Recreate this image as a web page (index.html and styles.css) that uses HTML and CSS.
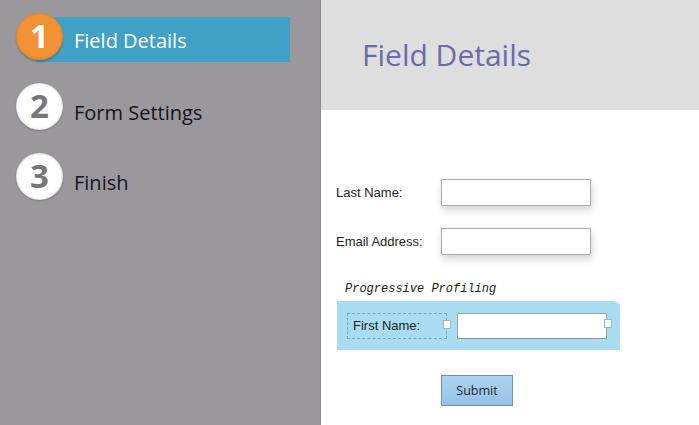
FILE: index.html
```html
<!DOCTYPE html>
<html>
<head>
<meta charset="utf-8">
<link rel="stylesheet" href="styles.css">
</head>
<body>
<div class="app">
  <aside class="sidebar">
    <div class="step active">
      <span class="num">1</span>
      <span class="label">Field Details</span>
    </div>
    <div class="step">
      <span class="num">2</span>
      <span class="label">Form Settings</span>
    </div>
    <div class="step">
      <span class="num">3</span>
      <span class="label">Finish</span>
    </div>
  </aside>
  <main class="main">
    <header class="header"><h1 class="title">Field Details</h1></header>
    <section class="form">
      <div class="row">
        <label class="lbl">Last Name:</label>
        <div class="input"></div>
      </div>
      <div class="row">
        <label class="lbl">Email Address:</label>
        <div class="input"></div>
      </div>
      <div class="pp-title">Progressive Profiling</div>
      <div class="pp-box">
        <div class="pp-label">First Name:<span class="handle h-left"></span></div>
        <div class="pp-input"><span class="handle h-right"></span></div>
      </div>
      <div class="submit-row"><button class="submit">Submit</button></div>
    </section>
  </main>
</div>
</body>
</html>
```
FILE: styles.css
```css
* { box-sizing: border-box; }
html, body { margin: 0; padding: 0; }
body { width: 699px; height: 425px; overflow: hidden; font-family: "Open Sans", sans-serif; }
.app { display: flex; height: 425px; }
.sidebar {
  width: 321px;
  flex: none;
  background: #9a989d;
  border-right: 1px solid #8a888d;
  padding-top: 17px;
}
.step {
  display: flex;
  align-items: center;
  height: 45px;
  margin-left: 36px;
  width: 254px;
  margin-bottom: 25px;
}
.step.active { background: #40a0c6; }
.num {
  flex: none;
  width: 47px;
  height: 47px;
  margin-left: -20px;
  margin-top: -6px;
  border-radius: 50%;
  background: #fff;
  color: #767579;
  font-weight: 700;
  font-size: 33px;
  line-height: 46px;
  text-align: center;
  box-shadow: inset 0 0 3px rgba(0,0,0,0.25), 0 1px 2px rgba(0,0,0,0.2);
}
.step.active .num {
  background: #f39235;
  color: #fff;
  box-shadow: inset 0 0 3px rgba(150,70,0,0.35), 0 2px 2px rgba(0,0,0,0.2);
}
.label {
  margin-left: 11px;
  font-size: 20px;
  color: #151515;
  margin-top: 6px;
}
.step.active .label { color: #fff; margin-top: 2px; }
.main { flex: 1; background: #fff; }
.header {
  height: 110px;
  background: #dedede;
  display: flex;
  align-items: center;
  padding-left: 41px;
}
.title {
  margin: 0;
  font-weight: 400;
  font-size: 30px;
  color: #6d6aa9;
  padding-bottom: 1px;
}
.form { padding-top: 69px; padding-left: 15px; font-family: "Liberation Sans", Arial, sans-serif; }
.row { display: flex; align-items: center; height: 27px; margin-bottom: 22px; }
.lbl { width: 105px; font-size: 13px; color: #222; }
.input {
  width: 150px; height: 27px;
  border: 1px solid #a9a9a9;
  background: #fff;
  box-shadow: 1px 4px 8px rgba(0,0,0,0.18);
}
.pp-title {
  font-family: "Liberation Mono", monospace;
  font-style: italic;
  font-size: 12px;
  color: #222;
  padding-left: 9px;
  height: 24px;
  line-height: 24px;
}
.pp-box {
  position: relative;
  width: 283px;
  height: 49px;
  margin-left: 1px;
  background: #a9dcf1;
  display: flex;
  align-items: center;
  padding-left: 10px;
}
.pp-box::after {
  content: "";
  position: absolute;
  right: 0; top: 0;
  width: 6px; height: 4px;
  background: #e4f3fa;
  clip-path: polygon(0 0, 100% 0, 100% 100%);
}
.pp-label {
  position: relative;
  width: 100px; height: 26px;
  border: 1px dashed #7fa6b6;
  font-size: 13px;
  color: #222;
  padding-left: 5px;
  line-height: 23px;
}
.pp-input {
  position: relative;
  margin-left: 10px;
  width: 150px; height: 26px;
  background: #fff;
  border: 1px solid #9aa3a8;
  border-bottom-color: #8f969a;
}
.handle {
  position: absolute;
  width: 8px; height: 9px;
  background: #fff;
  border: 1px solid #a5b3ba;
  top: 6px;
}
.h-left { right: -5px; }
.h-right { right: -6px; top: 5px; }
.submit-row { padding-left: 105px; margin-top: 25px; }
.submit {
  width: 72px; height: 31px;
  border: 1px solid #6a93b8;
  background: linear-gradient(#acd3f1, #96c2e6);
  font-family: "Open Sans", sans-serif;
  font-size: 12.5px;
  color: #1c2633;
  padding: 0;
}
```
